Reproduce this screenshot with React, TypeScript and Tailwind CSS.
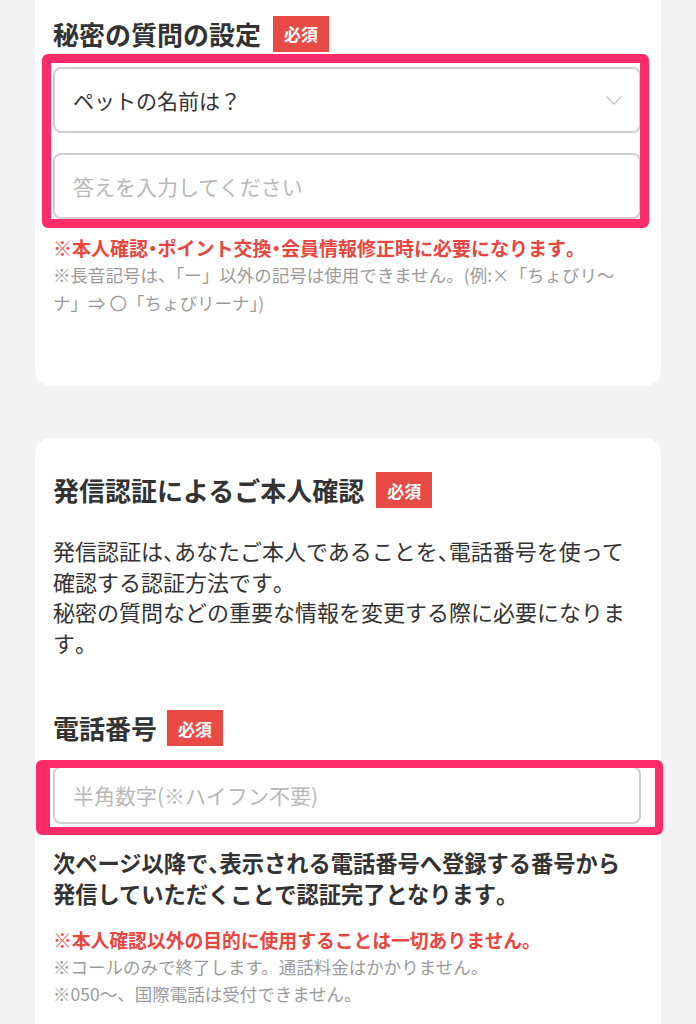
import React from "react";

const PUNCT = /([、。「」・])/;

function J({ t }: { t: string }) {
  const parts = t.split(PUNCT);
  return (
    <>
      {parts.map((p, i) =>
        PUNCT.test(p) && p.length === 1 ? (
          <span key={i} className="[font-feature-settings:'halt']">
            {p}
          </span>
        ) : (
          <React.Fragment key={i}>{p}</React.Fragment>
        )
      )}
    </>
  );
}

function Badge() {
  return (
    <span className="flex h-[36px] w-[56px] shrink-0 items-center justify-center bg-[#e84b45] text-[17px] font-bold leading-none text-white">
      必須
    </span>
  );
}

function Chevron() {
  return (
    <svg width="16" height="9" viewBox="0 0 16 9" fill="none" className="shrink-0">
      <path d="M1 1l7 7 7-7" stroke="#c9c9c9" strokeWidth="1.5" strokeLinecap="round" strokeLinejoin="round" />
    </svg>
  );
}

export default function App() {
  return (
    <div className="min-h-screen bg-[#f3f3f3] px-[35px] font-['Noto_Sans_CJK_JP',sans-serif] text-[#333]">
      {/* Card 1 */}
      <div className="rounded-b-2xl bg-white pb-[69px] pl-[18px] pr-[20px] pt-[15px]">
        <div className="flex h-[37px] items-center gap-[12px]">
          <h2 className="text-[26px] font-bold leading-none text-[#333]">秘密の質問の設定</h2>
          <Badge />
        </div>
        <div className="relative mt-[15px]">
          <div className="flex flex-col gap-[20px]">
            <div className="flex h-[66px] items-center justify-between rounded-[8px] border-2 border-[#cfcfd2] pl-[18px] pr-[17px]">
              <span className="text-[21px] leading-none text-[#333]">ペットの名前は？</span>
              <Chevron />
            </div>
            <div className="flex h-[66px] items-center rounded-[8px] border-2 border-[#cfcfd2] pl-[18px]">
              <span className="text-[21px] leading-none text-[#b8b8b8]">答えを入力してください</span>
            </div>
          </div>
          <div className="pointer-events-none absolute -bottom-[9px] -left-[11px] -right-[8px] -top-[13px] rounded-[6px] border-[9px] border-[#fc2c6a]" />
        </div>
        <p className="mt-[16px] text-[19px] font-bold leading-[26px] text-[#e9463f]">
          <J t="※本人確認・ポイント交換・会員情報修正時に必要になります。" />
        </p>
        <p className="text-[17.5px] leading-[28px] text-[#9b9b9b]">
          ※長音記号は、「ー」以外の記号は使用できません。(例:×「ちょびリ〜
          <br />
          ナ」⇒ 〇「ちょびリーナ」)
        </p>
      </div>

      {/* Card 2 */}
      <div className="mt-[52px] rounded-t-2xl bg-white pb-[40px] pl-[18px] pr-[20px] pt-[34px]">
        <div className="flex h-[36px] items-center gap-[12px]">
          <h2 className="text-[26px] font-bold leading-none text-[#333]">発信認証によるご本人確認</h2>
          <Badge />
        </div>
        <p className="mt-[27px] text-[22px] leading-[30.5px] text-[#333]">
          <J t="発信認証は、あなたご本人であることを、電話番号を使って" />
          <br />
          <J t="確認する認証方法です。" />
          <br />
          <J t="秘密の質問などの重要な情報を変更する際に必要になりま" />
          <br />
          <J t="す。" />
        </p>

        <div className="mt-[53px] flex h-[36px] items-center gap-[10px]">
          <h2 className="text-[26px] font-bold leading-none text-[#333]">電話番号</h2>
          <Badge />
        </div>
        <div className="relative mt-[20px]">
          <div className="flex h-[58px] items-center rounded-[8px] border-2 border-[#cfcfd2] pl-[18px]">
            <span className="text-[21px] leading-none text-[#b8b8b8]">半角数字(※ハイフン不要)</span>
          </div>
          <div className="pointer-events-none absolute -bottom-[11px] -left-[17px] -right-[22px] -top-[6px] rounded-[6px] border-[8px] border-l-[14px] border-[#fc2c6a]" />
        </div>
        <p className="mt-[23px] text-[22.25px] font-bold leading-[31px] text-[#333]">
          <J t="次ページ以降で、表示される電話番号へ登録する番号から" />
          <br />
          <J t="発信していただくことで認証完了となります。" />
        </p>
        <p className="mt-[18px] text-[18.8px] font-bold leading-[26px] text-[#e9463f]">
          <J t="※本人確認以外の目的に使用することは一切ありません。" />
        </p>
        <p className="text-[17.5px] leading-[27px] text-[#9b9b9b]">
          ※コールのみで終了します。通話料金はかかりません。
          <br />
          ※050〜、国際電話は受付できません。
        </p>
      </div>
    </div>
  );
}
